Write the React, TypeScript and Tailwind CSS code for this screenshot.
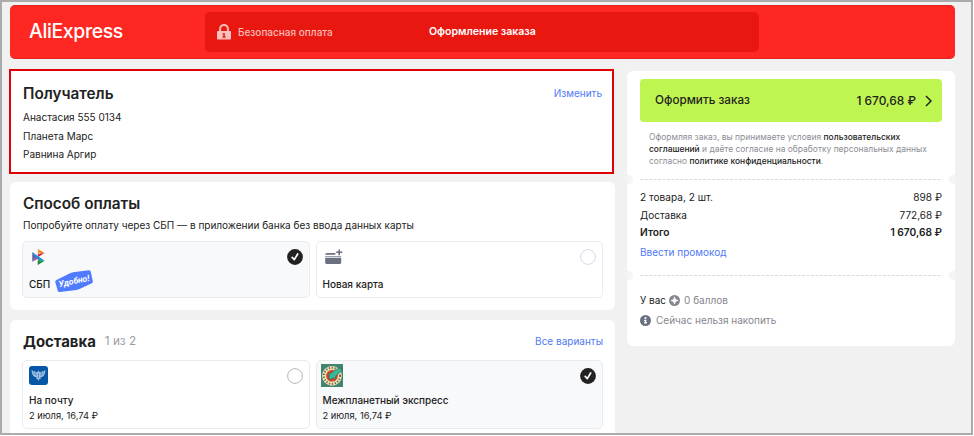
import type { ReactNode } from 'react';

function Check() {
  return (
    <svg className="size-4 shrink-0" viewBox="0 0 16 16" fill="none">
      <circle cx="8" cy="8" r="7.9" fill="#222222" />
      <path d="M5.2 8.4 7.3 10.6 10.7 5" stroke="#fff" strokeWidth="1.7" strokeLinecap="round" strokeLinejoin="round" />
    </svg>
  );
}

function Radio({ color }: { color: string }) {
  return (
    <svg className="size-4 shrink-0" viewBox="0 0 16 16" fill="none">
      <circle cx="8" cy="8" r="7.4" fill="#fff" stroke={color} />
    </svg>
  );
}

function Lock() {
  return (
    <svg className="h-4 w-[14px] shrink-0" viewBox="0 0 14 16" fill="none">
      <path d="M3.1 7.5V4.8a3.9 3.9 0 0 1 7.8 0v2.7" stroke="#fbb9b6" strokeWidth="2" />
      <rect x="0" y="7" width="14" height="8.6" rx=".8" fill="#fbc0bd" />
      <path d="M5.5 9.2h2.4v3.3h.9v1.3H5.4v-1.3h.8v-2h-.7z" fill="#e5231c" />
    </svg>
  );
}

function SbpIcon() {
  return (
    <svg className="h-4 w-[13px]" viewBox="0 0 13 16">
      <path d="M.3 3.1 3.4 8 .3 12.8z" fill="#5b57a2" />
      <path d="M5.8 0v5.4l2.700-1.700z" fill="#e8a13a" />
      <path d="m5.800 0 6.800 4.100-4.200.800z" fill="#f0802a" />
      <path d="M12.600 4.100 5.800 8.200V5.200z" fill="#d81f5c" />
      <path d="M.3 3.100 12.600 11.800 8.400 12 3 8.400z" fill="#1f8fd0" />
      <path d="M.3 12.800 3.200 8l3 1.500z" fill="#8a5a9e" />
      <path d="m5.800 10.200 2.800 1.600-2.800 4.100z" fill="#2b9c48" />
      <path d="M12.600 11.800 5.800 15.900V12.400z" fill="#1d8a3c" />
    </svg>
  );
}

function NewCardIcon() {
  return (
    <svg className="h-4 w-[18px]" viewBox="0 0 18 16" fill="#6b7080">
      <path d="M1.8 4h8.6v1.8H.2C.2 4.7.8 4 1.8 4Z" />
      <path d="M.2 7h16v.9H.2z" opacity=".75" />
      <path d="M.2 8.800h16v4.800c0 .9-.6 1.500-1.500 1.500h-13c-.9 0-1.500-.6-1.500-1.500z" />
      <path d="M13.400.500h1.600v2h2.300V4H15v2.200h-1.600V4h-2.200V2.500h2.200z" />
    </svg>
  );
}

function PostIcon() {
  return (
    <svg className="size-[19px]" viewBox="0 0 19 19">
      <rect width="19" height="19" rx="3" fill="#0757a6" />
      <path d="M2.600 4.200c1 .2 1.600.8 2.200 1.600.3-.5.6-.8 1-1 .2 1 .6 1.700 1.300 2.200l.6-1.600 1.200.6.600-2.300.600 2.300 1.200-.6.600 1.600c.7-.5 1.100-1.200 1.300-2.200.4.200.7.500 1 1 .6-.8 1.200-1.400 2.200-1.600 0 3-1 5.600-3.200 6.700l-1.900.3.600 1.800-1.300-.3L9.500 15l-1.100-2.300-1.300.3.600-1.800-1.900-.3C3.600 9.800 2.600 7.200 2.600 4.200Z" fill="#9fc1e2" />
      <path d="m4 6.500 3.500 3M6 6.800l2 2M15 6.500l-3.500 3M13 6.800l-2 2M9.500 7v5" stroke="#2c70b5" strokeWidth=".6" />
    </svg>
  );
}

function RocketIcon() {
  return (
    <svg className="h-[23px] w-[22px]" viewBox="0 0 22 23">
      <rect width="22" height="23" fill="#418571" />
      <circle cx="11" cy="11.800" r="9.900" fill="#eee0b5" />
      <circle cx="11" cy="11.800" r="8.100" fill="none" stroke="#6a6550" strokeWidth="2" strokeDasharray="1.200 1.700" />
      <circle cx="11" cy="11.800" r="6.600" fill="#e2d3a6" />
      <circle cx="11" cy="11.800" r="5.800" fill="#d8402b" />
      <path d="M21.300 4c-4 .1-8 1.700-10.700 4.700L6.600 10l2 1.500L7 14.600l1.900-.2.700 1.700 2.400-2.400 1.800 2 1.300-4C18.200 9.700 20.500 7.300 21.300 4Z" fill="#36b795" stroke="#39463c" strokeWidth=".5" />
    </svg>
  );
}

function Notches() {
  return (
    <div className="relative h-px">
      <span className="absolute -left-1 -top-[4px] h-[9px] w-[10px] rounded-full bg-[#f5f5f6]" />
      <span className="absolute -right-1 -top-[4px] h-[9px] w-[10px] rounded-full bg-[#f5f5f6]" />
      <svg className="mx-[13px] block h-px w-[302px]" viewBox="0 0 302 1">
        <path d="M0 .5h302" stroke="#d5d9e0" strokeDasharray="3 1.5" />
      </svg>
    </div>
  );
}

function Option({ icon, mark, active, height, children }: { icon: ReactNode; mark: ReactNode; active?: boolean; height: string; children: ReactNode }) {
  return (
    <div className={`flex-1 rounded-[5px] border border-[#e8ebf0] px-[6px] ${height} ${active ? 'bg-[#f8f9fb]' : 'bg-white'}`}>
      <div className="mb-[2px] flex h-[29px] items-center justify-between">
        {icon}
        {mark}
      </div>
      {children}
    </div>
  );
}

function SumRow({ label, value, className }: { label: string; value: string; className: string }) {
  return (
    <div className={`flex justify-between ${className}`}>
      <span>{label}</span>
      <span>{value}</span>
    </div>
  );
}

export default function App() {
  return (
    <div className="h-[436px] w-[974px] overflow-hidden bg-white font-['Inter',sans-serif] text-[10px] text-[#222222]">
      <div className="h-[435px] w-[973px] overflow-hidden border-2 border-[#ababab] bg-[#f1f1f1] pl-2 pt-[3px]">
        <header className="flex h-[54px] w-[945px] rounded-[5px] border-y border-[#e2241e] bg-[#ff2722] pt-[6px]">
          <div className="w-[195px] pl-[19px] text-[19.400px] font-medium leading-[39px] tracking-[-0.350px] text-white">AliExpress</div>
          <div className="flex h-10 w-[554px] items-center rounded-[5px] bg-[#e81811] pl-3">
            <Lock />
            <span className="ml-[7px] w-[191px] text-[10px] font-medium text-[#fcbab7]">Безопасная оплата</span>
            <span className="text-[10.550px] font-semibold text-white">Оформление заказа</span>
          </div>
        </header>

        <div className="mt-[10px] flex">
          <main className="-ml-px w-[606px]">
            <section className="h-[105px] w-[605px] border-2 border-[#e10008] bg-white pl-3 pr-[10px] pt-3">
              <div className="flex h-6 justify-between">
                <h2 className="text-[15.300px] font-semibold leading-[21px]">Получатель</h2>
                <a className="leading-5 text-[#5079f5]">Изменить</a>
              </div>
              <p className="mt-px leading-[18.500px]">Анастасия 555 0134</p>
              <p className="leading-[18.500px]">Планета Марс</p>
              <p className="leading-[18.500px]">Равнина Аргир</p>
            </section>

            <section className="ml-px mt-2 h-[128px] rounded-[6px] bg-white px-3 pt-[10px]">
              <h2 className="pl-px text-[15.300px] font-semibold leading-6">Способ оплаты</h2>
              <p className="pl-px text-[10.020px] leading-[19px]">Попробуйте оплату через СБП — в приложении банка без ввода данных карты</p>
              <div className="mt-[6px] flex gap-[6px]">
                <Option active height="h-[57px]" icon={<span className="pl-[3px]"><SbpIcon /></span>} mark={<Check />}>
                  <div className="flex items-center">
                    <span className="mt-px font-medium leading-5">СБП</span>
                    <div className="relative -mt-[5px] ml-[5px] h-[22px] w-[38px]">
                      <svg className="absolute inset-0 h-[22px] w-[38px]" viewBox="0 0 38 22">
                        <path d="M3 9.200 15 3.300C16 2.800 17 2.500 18 2.300L33.500.3C34.600.2 35.600.8 35.800 1.900L37.800 11c.3 1.100-.3 2.200-1.400 2.600L24.500 19c-1 .5-2 .8-3 .9L5 22c-1.200.1-2-.5-2.300-1.600L.3 12.200C0 10.900 1 10 3 9.200Z" fill="#507bff" />
                      </svg>
                      <span className="absolute inset-0 flex -rotate-[12deg] items-center justify-center font-['Roboto',sans-serif] text-[8.600px] font-bold italic text-white">Удобно!</span>
                    </div>
                  </div>
                </Option>
                <Option height="h-[57px]" icon={<span className="pl-[2px]"><NewCardIcon /></span>} mark={<Radio color="#d2dce9" />}>
                  <div className="pt-px font-medium leading-5">Новая карта</div>
                </Option>
              </div>
            </section>

            <section className="ml-px mt-[10px] h-[140px] rounded-[6px] bg-white px-3 pt-[10px]">
              <div className="flex h-6 items-center pl-px">
                <h2 className="text-[14.900px] font-bold">Доставка</h2>
                <span className="ml-[9px] text-[11.800px] text-[#9b9ca3]">1 из 2</span>
                <a className="-mt-px ml-auto text-[#5079f5]">Все варианты</a>
              </div>
              <div className="mt-[6px] flex gap-[6px]">
                <Option height="h-[69px]" icon={<PostIcon />} mark={<Radio color="#b8b8b8" />}>
                  <div className="font-medium leading-[17px]">На почту</div>
                  <div className="text-[9.300px] leading-[13px]">2 июля, 16,74 ₽</div>
                </Option>
                <Option active height="h-[69px]" icon={<span className="-ml-[2px]"><RocketIcon /></span>} mark={<Check />}>
                  <div className="font-medium leading-[17px]">Межпланетный экспресс</div>
                  <div className="text-[9.300px] leading-[13px]">2 июля, 16,74 ₽</div>
                </Option>
              </div>
            </section>
          </main>

          <aside className="ml-3 mt-[2px] h-[275px] w-[328px] overflow-hidden rounded-[6px] bg-white pt-2">
            <div className="mx-[13px] flex h-[43px] items-center rounded-[4px] bg-[#bff550] pl-[15px] pr-[10px] text-[11.700px] font-medium">
              <span className="mt-px">Оформить заказ</span>
              <span className="ml-auto mt-px text-[11.900px]">1 670,68 ₽</span>
              <svg className="ml-[9px] h-3 w-[7px]" viewBox="0 0 7 12" fill="none">
                <path d="m1 1 5 5-5 5" stroke="#222" strokeWidth="1.500" />
              </svg>
            </div>
            <p className="ml-[22px] mt-[9px] whitespace-nowrap text-[8.450px] leading-3 text-[#8c8d95]">
              Оформляя заказ, вы принимаете условия <span className="font-medium text-[#222]">пользовательских</span>
              <br />
              <span className="font-medium text-[#222]">соглашений</span> и даёте согласие на обработку персональных данных
              <br />
              согласно <span className="font-medium text-[#222]">политике конфиденциальности</span>.
            </p>
            <div className="mt-3">
              <Notches />
            </div>
            <div className="px-[13px] pt-2">
              <SumRow label="2 товара, 2 шт." value="898 ₽" className="text-[10.100px] leading-[18px]" />
              <SumRow label="Доставка" value="772,68 ₽" className="leading-[19px]" />
              <SumRow label="Итого" value="1 670,68 ₽" className="text-[10.200px] font-semibold leading-[15px]" />
              <a className="block h-[35px] pt-px leading-[22px] text-[#5079f5]">Ввести промокод</a>
            </div>
            <Notches />
            <div className="px-[13px] pt-[14px]">
              <div className="flex h-5 items-center">
                <span>У вас</span>
                <svg className="ml-[3px] size-[11px]" viewBox="0 0 11 11">
                  <circle cx="5.500" cy="5.500" r="5.500" fill="#85868f" />
                  <path d="M5.500 1.900C5.900 4 7 5.100 9.100 5.500 7 5.900 5.900 7 5.500 9.100 5.100 7 4 5.900 1.900 5.500 4 5.100 5.100 4 5.500 1.900Z" fill="#fff" stroke="#fff" strokeWidth=".7" />
                </svg>
                <span className="ml-1 text-[#85868f]">0 баллов</span>
              </div>
              <div className="flex h-5 items-center">
                <svg className="size-[11px]" viewBox="0 0 11 11">
                  <circle cx="5.500" cy="5.500" r="5.500" fill="#6b7080" />
                  <circle cx="5.500" cy="3" r="1.100" fill="#fff" />
                  <path d="M4.100 4.800h2.200v2.500h.7v1.300H4v-1.300h.7V6h-.6z" fill="#fff" />
                </svg>
                <span className="ml-[5px] text-[#85868f]">Сейчас нельзя накопить</span>
              </div>
            </div>
          </aside>
        </div>
      </div>
    </div>
  );
}
